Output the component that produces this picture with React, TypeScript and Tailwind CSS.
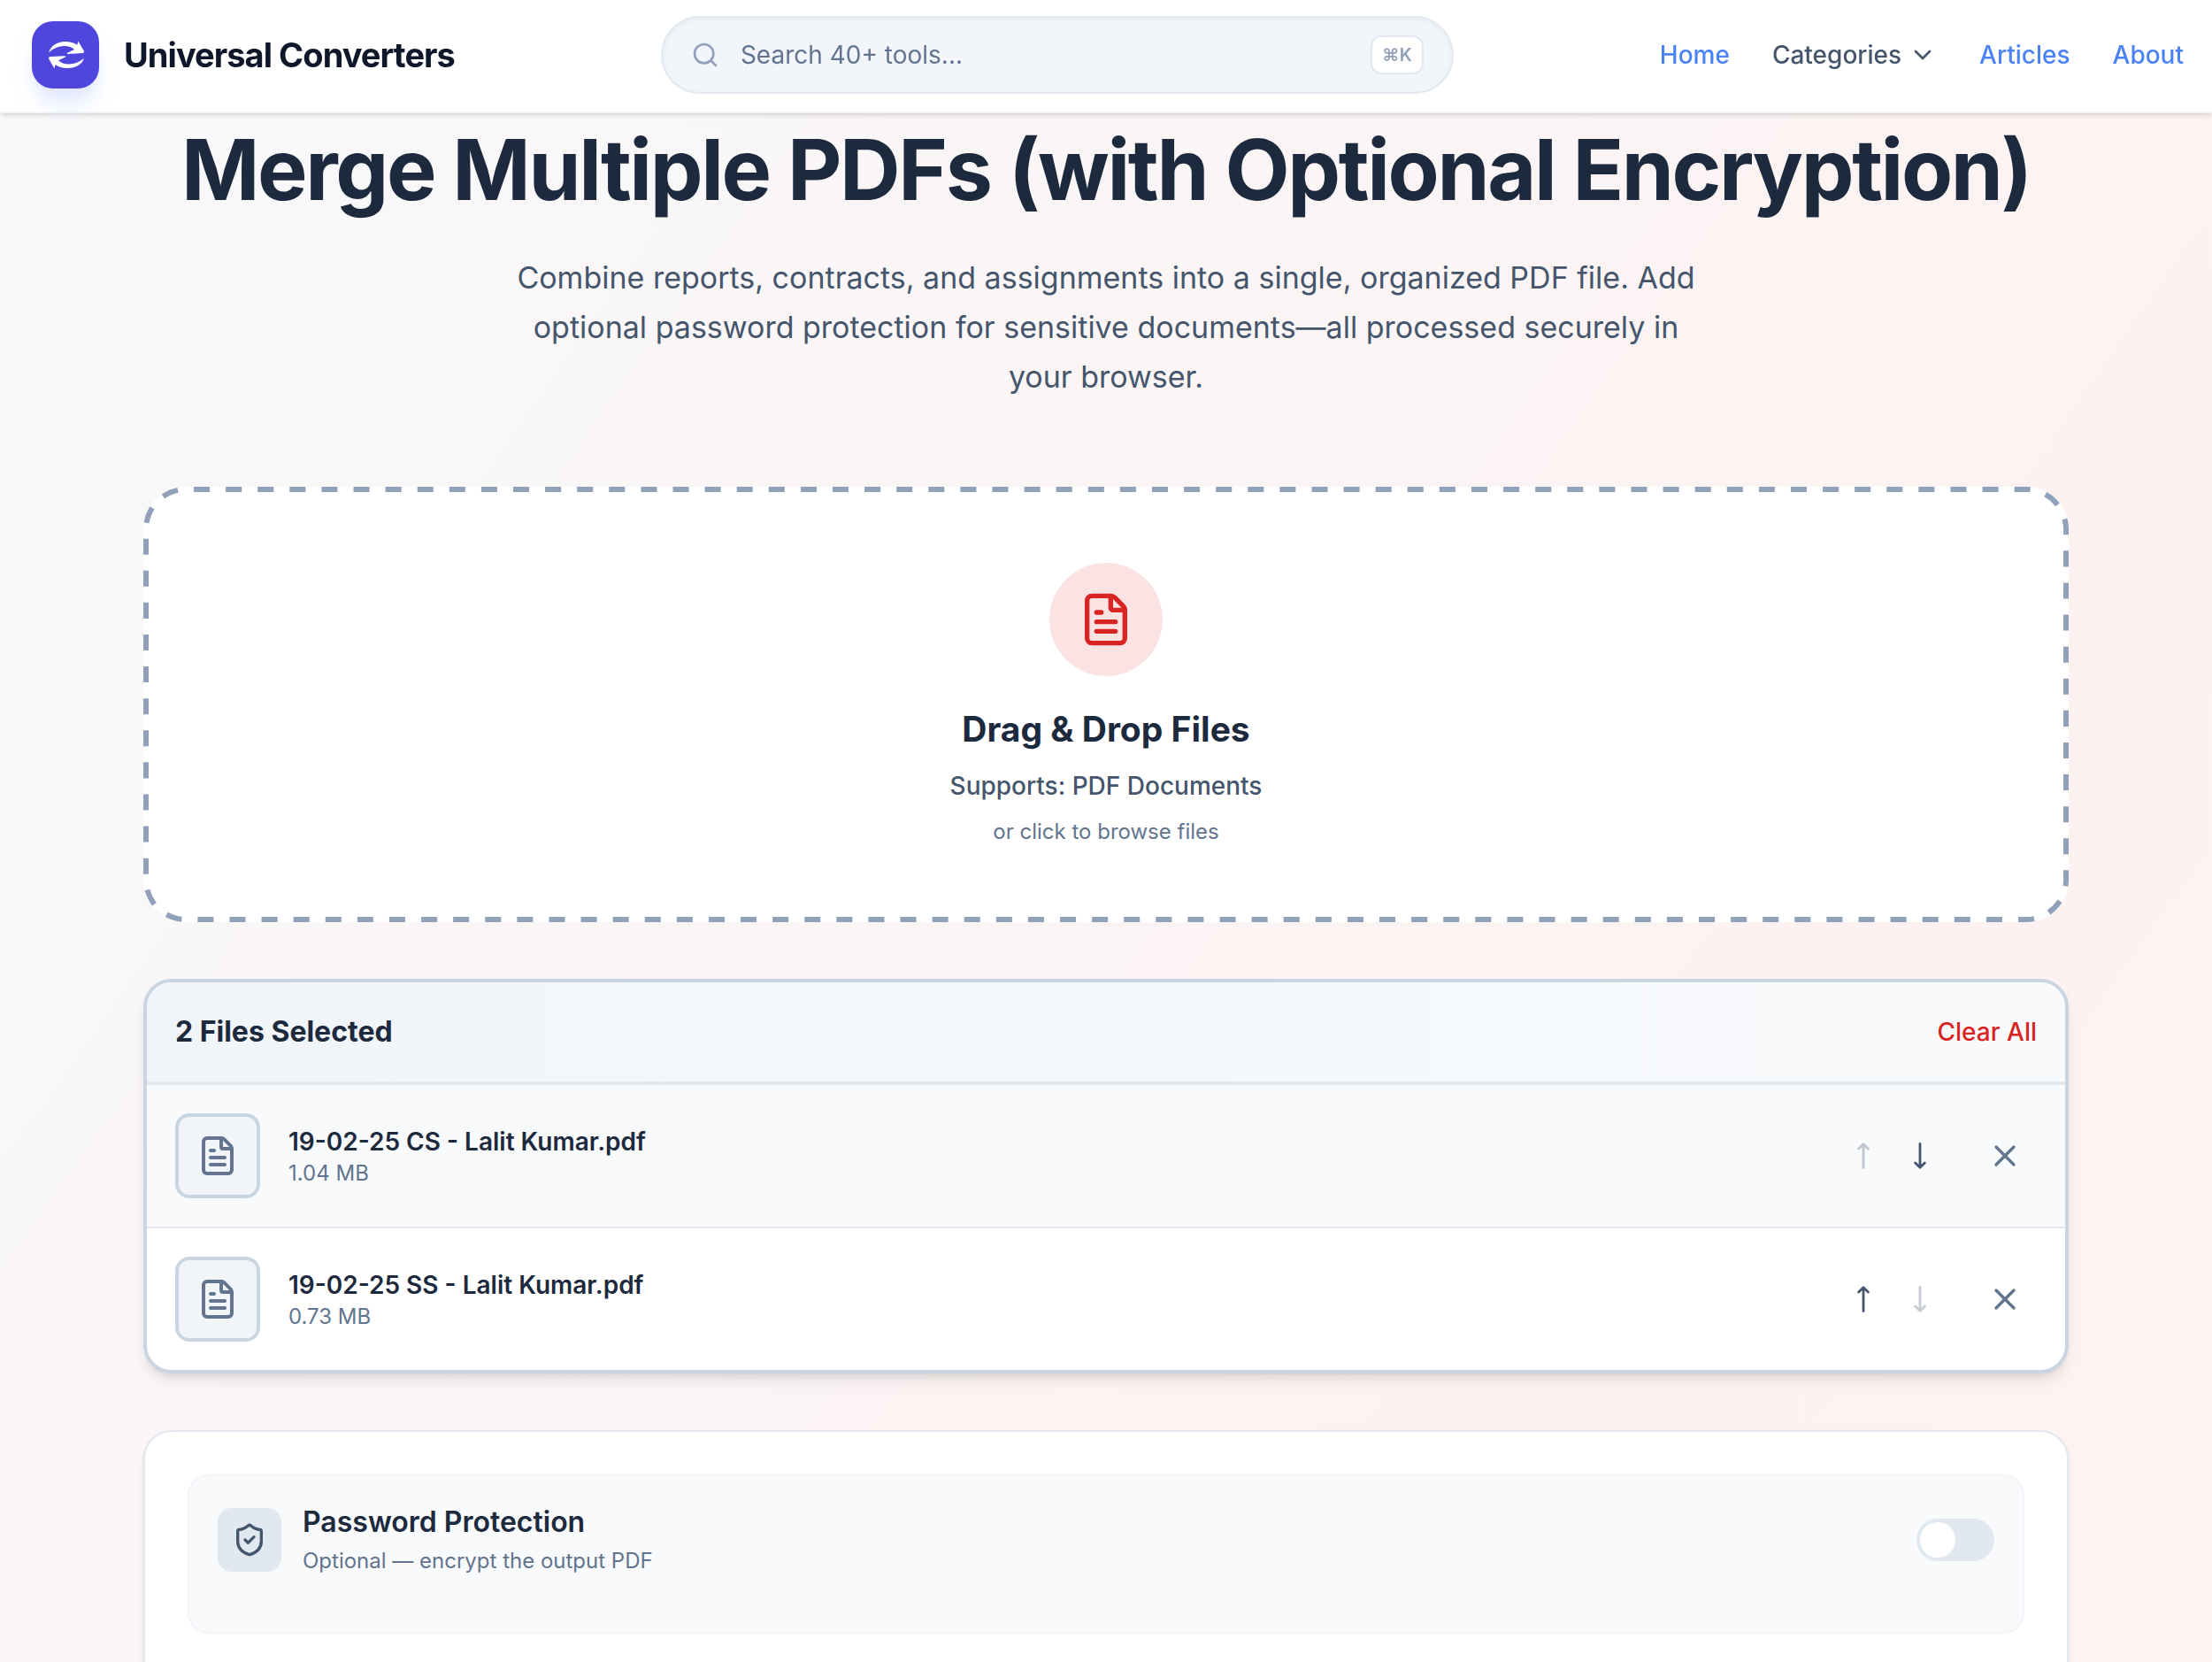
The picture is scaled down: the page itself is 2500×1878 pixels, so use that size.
import { useState } from "react"
import { ChevronDown, FileText, Search, ShieldCheck, X } from "lucide-react"

interface PdfFile {
  name: string
  size: string
}

const initialFiles: PdfFile[] = [
  { name: "19-02-25 CS - Lalit Kumar.pdf", size: "1.04 MB" },
  { name: "19-02-25 SS - Lalit Kumar.pdf", size: "0.73 MB" },
]

function LogoMark() {
  return (
    <svg viewBox="0 0 76 76" className="size-[76px]" fill="white" aria-hidden="true">
      <path d="M19 35.500C21 28 28.500 23 37.500 23c6 0 10.500 1.400 13.800 3.800L52.300 22.500 59 33.800c.3 1.400-.3 2.100-1.800 2.300L41 36.900c-1.800 0-1.600-1-.3-1.500l7.300-3.400C42 25.500 27.500 26.800 19 35.500Z" />
      <path d="M59 41.500C57 48.800 49.500 53 40.500 53c-6 0-10.500-1.400-14-3.900L25.500 53.500 19.200 42.500c-.3-1.500.3-2.200 1.800-2.400L37 39.300c1.800 0 1.600 1 .3 1.500L30 44.200C36 50.500 50.500 50 59 41.500Z" />
    </svg>
  )
}

function Header() {
  return (
    <header className="sticky top-0 z-10 flex h-32 items-center justify-between border-b-2 border-slate-100 bg-white/95 pr-8 pb-0.5 pl-9 shadow-md backdrop-blur-md">
      <a href="#" className="flex shrink-0 items-center gap-7">
        <span className="rounded-3xl bg-[#4f46dd] shadow-xl shadow-indigo-100">
          <LogoMark />
        </span>
        <span className="text-[38px] font-bold tracking-tight text-slate-900">Universal Converters</span>
      </a>

      <div className="flex h-[88px] w-full max-w-[896px] items-center gap-6 rounded-full border-2 border-slate-200 bg-slate-100/90 px-8 inset-shadow-sm">
        <Search className="size-8 text-slate-400" aria-hidden="true" />
        <input
          type="search"
          aria-label="Search tools"
          placeholder="Search 40+ tools..."
          className="min-w-0 flex-1 bg-transparent text-[28px] text-slate-500 outline-none placeholder:text-slate-500"
        />
        <kbd className="flex h-11 w-[60px] items-center justify-center rounded-xl border-2 border-slate-200 bg-white font-[Inter,sans-serif] text-xl font-semibold text-slate-400">
          ⌘K
        </kbd>
      </div>

      <nav className="flex shrink-0 items-center gap-12 text-[28px] font-medium text-[#4b83f6]">
        <a href="#">Home</a>
        <button type="button" className="flex items-center gap-2 text-slate-600">
          Categories
          <ChevronDown className="size-8" aria-hidden="true" />
        </button>
        <a href="#">Articles</a>
        <a href="#">About</a>
      </nav>
    </header>
  )
}

// border-dashed packs the dashes too tightly, so the outline is stroked by hand
function DashedOutline() {
  return (
    <svg className="pointer-events-none absolute inset-0 size-full text-slate-400" fill="none" aria-hidden="true">
      <rect
        x="3"
        y="3"
        rx="45"
        pathLength="5220"
        className="h-[calc(100%-6px)] w-[calc(100%-6px)]"
        stroke="currentColor"
        strokeWidth="6"
        strokeDasharray="18 18"
        strokeDashoffset="-9"
      />
    </svg>
  )
}

function Arrow({ down = false }: { down?: boolean }) {
  return (
    <svg
      viewBox="0 0 16 32"
      className="h-8 w-4"
      fill="none"
      stroke="currentColor"
      strokeWidth="2.8"
      strokeLinecap="round"
      strokeLinejoin="round"
      aria-hidden="true"
    >
      <path d={down ? "M8 2.500v26.500M2.600 24 8 29.200 13.400 24" : "M8 29.500V3M2.600 8 8 2.800 13.400 8"} />
    </svg>
  )
}

export default function App() {
  const [files, setFiles] = useState(initialFiles)
  const [encrypt, setEncrypt] = useState(false)

  function swap(a: number, b: number) {
    const next = [...files]
    next[a] = files[b]
    next[b] = files[a]
    setFiles(next)
  }

  return (
    <div className="min-h-screen bg-[linear-gradient(125deg,#f8f9fb,#fdf2f1_72%,#fdf3f1)] font-[Inter,sans-serif]">
      <Header />

      <main className="mx-auto flex max-w-[2240px] flex-col gap-16 px-8 pt-4 pb-16">
        <div className="flex flex-col items-center gap-[46px] text-center">
          <h1 className="text-[95px] leading-24 font-bold tracking-tight text-slate-800">
            Merge Multiple PDFs (with Optional Encryption)
          </h1>
          <p className="mb-8 max-w-[1344px] text-[34px] leading-14 text-slate-600">
            Combine reports, contracts, and assignments into a single, organized PDF file. Add optional
            password protection for sensitive documents—all processed securely in your browser.
          </p>
        </div>

        <button type="button" className="relative flex flex-col items-center rounded-[48px] bg-white py-[86px]">
          <DashedOutline />
          <span className="mb-8 flex size-32 items-center justify-center rounded-full bg-[#fce3e3] text-[#d92424]">
            <FileText className="size-16" aria-hidden="true" />
          </span>
          <span className="mb-4 text-[39px] leading-14 font-bold text-slate-800">Drag &amp; Drop Files</span>
          <span className="mb-4 text-[28px] leading-10 font-medium text-slate-600">Supports: PDF Documents</span>
          <span className="text-2xl text-slate-500">or click to browse files</span>
        </button>

        <section className="overflow-hidden rounded-4xl border-4 border-slate-300 bg-white shadow-lg">
          <div className="flex h-29 items-center justify-between border-b-4 border-slate-200 bg-linear-to-r from-slate-100 to-slate-50 px-8">
            <h2 className="text-[32px] font-bold text-slate-800">{files.length} Files Selected</h2>
            <button type="button" onClick={() => setFiles([])} className="text-[28px] font-medium text-[#d92424]">
              Clear All
            </button>
          </div>

          <ul className="divide-y-2 divide-slate-200">
            {files.map((file, i) => (
              <li key={file.name} className="flex items-center gap-8 p-8 odd:bg-slate-50">
                <div className="flex size-24 items-center justify-center rounded-2xl border-4 border-slate-300 bg-slate-100 text-slate-500">
                  <FileText className="size-12" aria-hidden="true" />
                </div>
                <div className="flex-1">
                  <p className="text-[28px] leading-10 font-semibold text-slate-800">{file.name}</p>
                  <p className="text-2xl text-slate-500">{file.size}</p>
                </div>
                <div className="flex gap-2 text-slate-600">
                  <button
                    type="button"
                    aria-label="Move up"
                    disabled={i === 0}
                    onClick={() => swap(i, i - 1)}
                    className="flex size-14 items-center justify-center disabled:opacity-30"
                  >
                    <Arrow />
                  </button>
                  <button
                    type="button"
                    aria-label="Move down"
                    disabled={i === files.length - 1}
                    onClick={() => swap(i, i + 1)}
                    className="flex size-14 items-center justify-center disabled:opacity-30"
                  >
                    <Arrow down />
                  </button>
                </div>
                <button
                  type="button"
                  aria-label="Remove file"
                  onClick={() => setFiles(files.filter((f) => f !== file))}
                  className="p-4 text-slate-500"
                >
                  <X className="size-10" aria-hidden="true" />
                </button>
              </li>
            ))}
          </ul>
        </section>

        <section className="rounded-4xl border-2 border-slate-200 bg-white p-12 pb-20 shadow-md">
          <div className="rounded-3xl border-2 border-slate-100 bg-slate-50 p-8 pb-16">
            <label className="flex items-center gap-6">
              <span className="flex size-18 items-center justify-center rounded-2xl bg-slate-200 text-slate-600">
                <ShieldCheck className="size-10" aria-hidden="true" />
              </span>
              <span className="flex flex-1 flex-col gap-2">
                <span className="text-[32px] leading-10 font-semibold text-slate-800">Password Protection</span>
                <span className="text-2xl text-slate-500">Optional — encrypt the output PDF</span>
              </span>
              <input
                type="checkbox"
                role="switch"
                checked={encrypt}
                onChange={(e) => setEncrypt(e.target.checked)}
                className="h-12 w-22 appearance-none rounded-full bg-slate-200 p-1 before:block before:size-10 before:rounded-full before:bg-white checked:bg-indigo-600 checked:before:ml-auto"
              />
            </label>
          </div>
        </section>
      </main>
    </div>
  )
}
